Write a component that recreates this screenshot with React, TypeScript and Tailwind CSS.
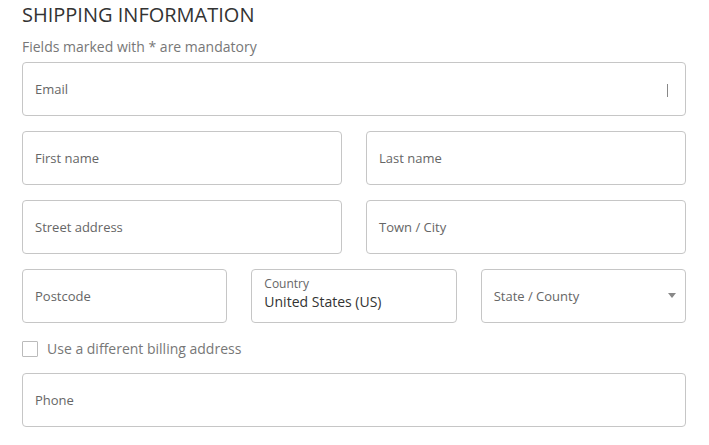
import React from "react";

const box =
  "h-[54px] rounded-[4px] border border-[#c6c6c6] bg-white flex items-center px-3 pt-[2px] text-[13px] text-[#666]";

function Field({ label, className = "" }: { label: string; className?: string }) {
  return (
    <div className={`${box} ${className}`}>
      <span>{label}</span>
    </div>
  );
}

export default function App() {
  return (
    <div
      className="w-[709px] h-[445px] bg-white px-[22px] pt-[3px] overflow-hidden"
      style={{ fontFamily: '"Open Sans", sans-serif' }}
    >
      <h2 className="text-[20px] leading-[24px] text-[#333]">SHIPPING INFORMATION</h2>
      <p className="mt-[10px] text-[14px] leading-[20px] text-[#777]">
        Fields marked with * are mandatory
      </p>

      <div className="mt-[5px] w-[664px] flex flex-col gap-[15px]">
        <div className={`${box} justify-between pr-[17px]`}>
          <span>Email</span>
          <span className="w-px h-[13px] bg-[#888]" />
        </div>

        <div className="grid grid-cols-2 gap-[24px]">
          <Field label="First name" />
          <Field label="Last name" />
        </div>

        <div className="grid grid-cols-2 gap-[24px]">
          <Field label="Street address" />
          <Field label="Town / City" />
        </div>

        <div className="grid grid-cols-3 gap-[24px]">
          <Field label="Postcode" />
          <div className="h-[54px] rounded-[4px] border border-[#c6c6c6] bg-white flex flex-col justify-center px-3 pb-[4px]">
            <span className="text-[12px] leading-[16px] text-[#666]">Country</span>
            <span className="text-[14px] leading-[20px] text-[#333]">United States (US)</span>
          </div>
          <div className={`${box} justify-between pr-[9px]`}>
            <span>State / County</span>
            <svg width="8" height="5" viewBox="0 0 8 5" className="mt-[-3px]">
              <path d="M0 0h8L4 5z" fill="#888" />
            </svg>
          </div>
        </div>
      </div>

      <label className="mt-[16px] flex items-center gap-[9px] text-[14px] leading-[20px] text-[#777]">
        <span className="w-[16px] h-[16px] border border-[#bbb] bg-white rounded-[1px]" />
        Use a different billing address
      </label>

      <div className="mt-[14px] w-[664px]">
        <Field label="Phone" />
      </div>
    </div>
  );
}
